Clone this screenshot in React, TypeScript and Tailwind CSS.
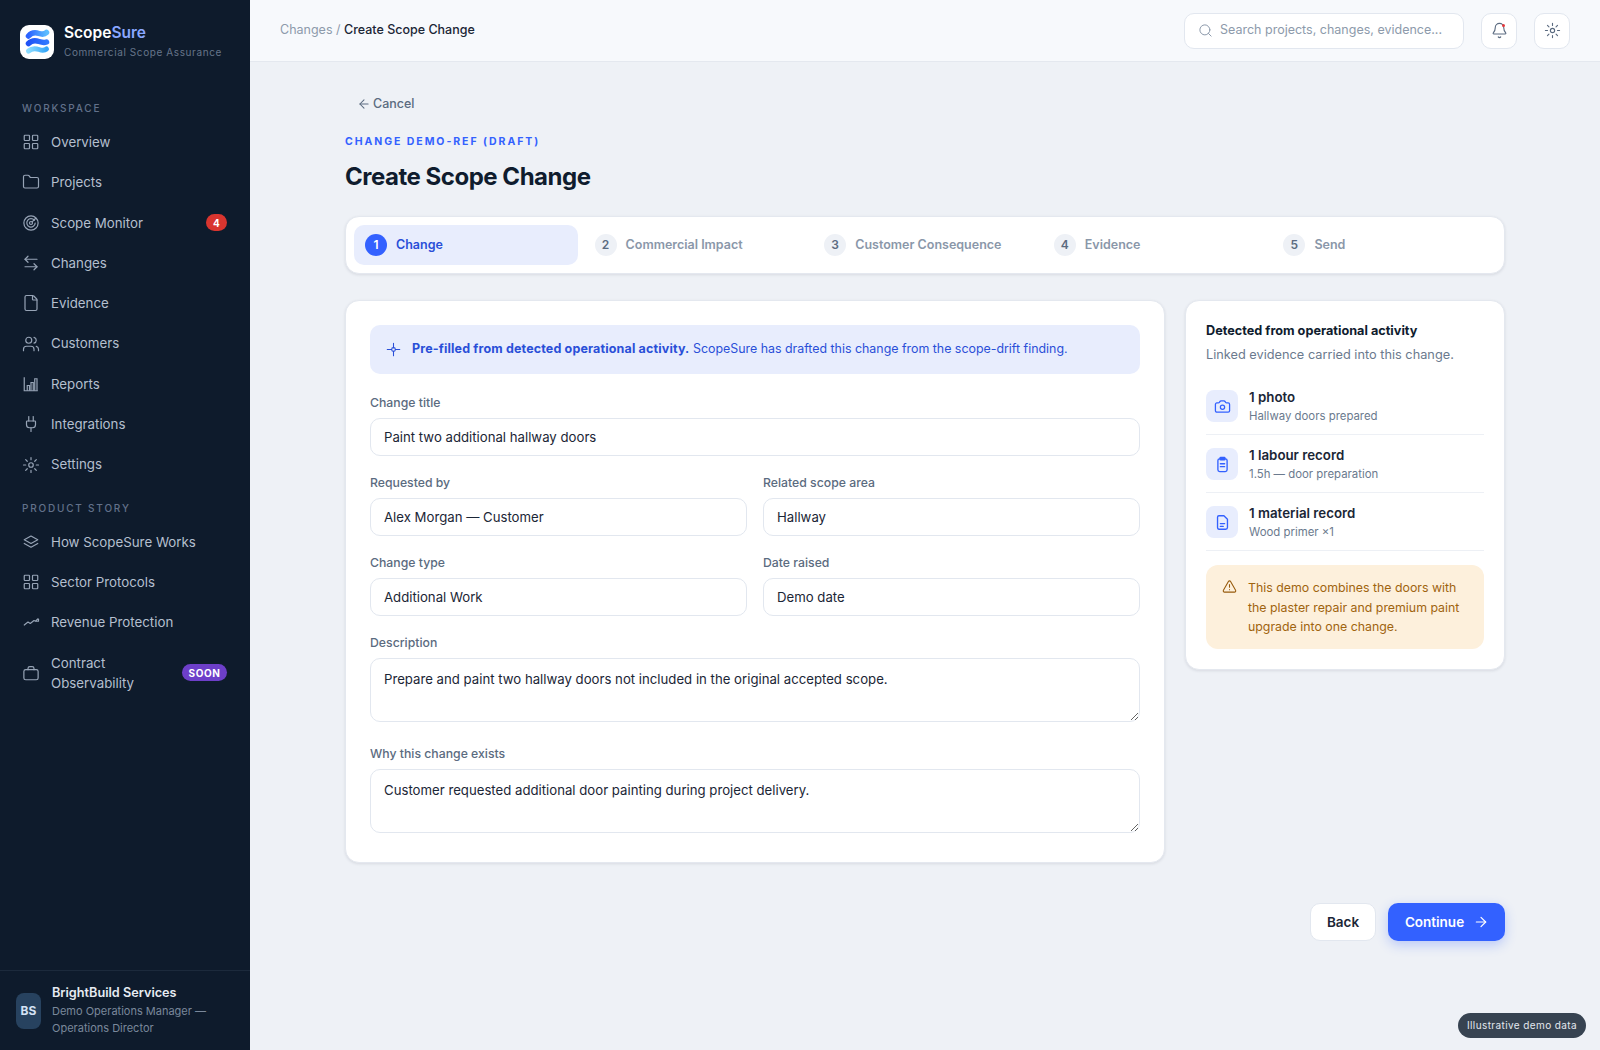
import React from "react";
import { ArrowLeft, ArrowRight, ArrowLeftRight, Bell, Camera, File, Folder, LayoutGrid, Plug, Search, TriangleAlert, Users } from "lucide-react";

type IconProps = { className?: string; strokeWidth?: number };

const SunThin = ({ className }: IconProps) => (
  <svg viewBox="0 0 24 24" fill="none" stroke="currentColor" strokeWidth="1.6" strokeLinecap="round" className={className}>
    <circle cx="12" cy="12" r="3" />
    <path d="M12 2v3M12 19v3M2 12h3M19 12h3M4.900 4.900l2.100 2.100M17 17l2.100 2.100M4.900 19.100L7 17M17 7l2.100-2.100" />
  </svg>
);
const Scope = ({ className }: IconProps) => (
  <svg viewBox="0 0 24 24" fill="none" stroke="currentColor" strokeWidth="1.6" strokeLinecap="round" className={className}>
    <circle cx="12" cy="12" r="9.500" />
    <path d="M16.500 8.500A5.600 5.600 0 1 0 17.600 12" />
    <circle cx="12" cy="12" r="2" />
    <path d="M13.500 10.500L18 6" />
  </svg>
);
const Reports = ({ className }: IconProps) => (
  <svg viewBox="0 0 24 24" fill="none" stroke="currentColor" strokeWidth="1.6" className={className}>
    <path d="M3 3v18h18" />
    <path d="M7 21v-7h3v7M12 21V10h3v11M17 21V5h3v16" />
  </svg>
);
const Sparkle = ({ className }: IconProps) => (
  <svg viewBox="0 0 24 24" fill="none" stroke="currentColor" strokeWidth="1.7" strokeLinecap="round" className={className}>
    <path d="M12 2v7M12 15v7M2 12h7M15 12h7" />
    <circle cx="12" cy="12" r="3" />
  </svg>
);
const Stack = ({ className }: IconProps) => (
  <svg viewBox="0 0 24 24" fill="none" stroke="currentColor" strokeWidth="1.6" strokeLinecap="round" strokeLinejoin="round" className={className}>
    <path d="M12 4L3 9l9 5 9-5z" />
    <path d="M3 14l9 5 9-5" />
  </svg>
);
const Trend = ({ className }: IconProps) => (
  <svg viewBox="0 0 24 24" fill="none" stroke="currentColor" strokeWidth="1.6" strokeLinecap="round" strokeLinejoin="round" className={className}>
    <path d="M3 16l5-4 3 2 5-4 2 1 3-3" />
    <path d="M22 8v3h-3" />
  </svg>
);
const Case = ({ className }: IconProps) => (
  <svg viewBox="0 0 24 24" fill="none" stroke="currentColor" strokeWidth="1.6" strokeLinecap="round" strokeLinejoin="round" className={className}>
    <rect x="2.500" y="7.500" width="19" height="13.500" rx="2.500" />
    <path d="M8 7.500V6a2.500 2.500 0 0 1 2.500-2.500h3A2.500 2.500 0 0 1 16 6v1.500" />
  </svg>
);
const Clip = ({ className }: IconProps) => (
  <svg viewBox="0 0 24 24" fill="none" stroke="currentColor" strokeWidth="1.9" strokeLinecap="round" strokeLinejoin="round" className={className}>
    <rect x="5.500" y="4" width="13" height="18" rx="2.500" />
    <rect x="8.500" y="2" width="7" height="3.500" rx="1" fill="currentColor" />
    <path d="M9 11h6M9 15h6" />
  </svg>
);
const Doc = ({ className }: IconProps) => (
  <svg viewBox="0 0 24 24" fill="none" stroke="currentColor" strokeWidth="1.9" strokeLinecap="round" strokeLinejoin="round" className={className}>
    <path d="M7 2.500h7l5 5V19a2.500 2.500 0 0 1-2.500 2.500h-9.500A2.500 2.500 0 0 1 5 19V4.500a2 2 0 0 1 2-2z" />
    <path d="M9 13.500h6M9 17.500h4" />
  </svg>
);
const Logo = () => (
  <div className="flex h-[34px] w-[34px] shrink-0 items-center justify-center rounded-[9px] bg-white">
    <svg viewBox="0 0 34 34" fill="none" strokeLinecap="round" className="h-[34px] w-[34px]">
      <defs>
        <linearGradient id="lg1" x1="0" y1="0" x2="1" y2="0"><stop offset="0" stopColor="#2b63ff" /><stop offset="1" stopColor="#5cbcff" /></linearGradient>
        <linearGradient id="lg2" x1="0" y1="0" x2="1" y2="0"><stop offset="0" stopColor="#1f52f5" /><stop offset="1" stopColor="#2f78ff" /></linearGradient>
        <linearGradient id="lg3" x1="0" y1="0" x2="1" y2="0"><stop offset="0" stopColor="#8bdcff" /><stop offset="1" stopColor="#35a6f8" /></linearGradient>
      </defs>
      <path d="M8.500 11C12 7 16 7.500 19 8.500S24 10 26.500 7.500" stroke="url(#lg1)" strokeWidth="5.500" />
      <path d="M8.500 18.500C12 15 16 15.500 19 16.500S24 18 26.500 17" stroke="url(#lg2)" strokeWidth="5.500" />
      <path d="M8.500 26C12 23 16 23.500 19 24.500S24 26 26.500 24" stroke="url(#lg3)" strokeWidth="5" />
    </svg>
  </div>
);

const NavItem = ({ icon: Icon, label, badge }: { icon: React.ComponentType<IconProps>; label: string; badge?: React.ReactNode }) => (
  <div className="flex items-center gap-[11px] rounded-lg py-[10px] pr-[11px] pl-[10px] text-[13.3px] leading-[20.3px] text-[#b4bfce]">
    <Icon className="h-[18px] w-[18px] shrink-0 text-[#97a4b6]" strokeWidth={1.6} />
    <span className="min-w-0 flex-1">{label}</span>
    {badge}
  </div>
);

const SectionLabel = ({ children }: { children: React.ReactNode }) => (
  <div className="px-[10px] pb-[6px] text-[10px] font-medium leading-[15px] tracking-[0.18em] text-[#62718a]">{children}</div>
);

const Step = ({ n, label, active }: { n: number; label: string; active?: boolean }) => (
  <div className={active ? "flex h-[40px] items-center gap-[9px] rounded-[10px] bg-[#e8edfd] px-[11px]" : "flex h-[40px] items-center gap-[9px] rounded-[10px] px-[11px]"}>
    <span className={active ? "flex h-[22px] w-[22px] items-center justify-center rounded-full bg-[#3361ff] text-[12px] font-semibold text-white" : "flex h-[22px] w-[22px] items-center justify-center rounded-full bg-[#eef1f6] text-[12px] font-semibold text-[#5b6b80]"}>{n}</span>
    <span className={active ? "text-[12.5px] font-semibold text-[#2a4fd8]" : "text-[12.5px] font-semibold text-[#8a97a9]"}>{label}</span>
  </div>
);

const Label = ({ children }: { children: React.ReactNode }) => (
  <label className="mb-[6px] block text-[12.25px] font-medium leading-[18px] text-[#5b6b80]">{children}</label>
);

const Field = ({ label, value }: { label: string; value: string }) => (
  <div>
    <Label>{label}</Label>
    <input readOnly value={value} className="h-[38px] w-full rounded-[10px] border border-[#e2e7ef] bg-white px-[13px] text-[13.2px] text-[#1b2636] outline-none" />
  </div>
);

const Area = ({ label, value }: { label: string; value: string }) => (
  <div>
    <Label>{label}</Label>
    <textarea readOnly value={value} className="h-[64px] w-full rounded-[10px] border border-[#e2e7ef] bg-white px-[13px] py-[10px] text-[13.2px] leading-[20px] text-[#1b2636] outline-none" />
  </div>
);

const Evidence = ({ icon: Icon, title, sub }: { icon: React.ComponentType<IconProps>; title: string; sub: string }) => (
  <div className="flex items-center gap-[11px] border-b border-[#edf0f5] pt-[11px] pb-[10px]">
    <div className="flex h-[32px] w-[32px] shrink-0 items-center justify-center rounded-[8px] bg-[#e8edfd] text-[#3361ff]">
      <Icon className="h-[17px] w-[17px]" strokeWidth={1.8} />
    </div>
    <div>
      <div className="text-[13.3px] font-semibold leading-[18px] text-[#1b2636]">{title}</div>
      <div className="mt-[2px] text-[11.4px] leading-[16px] text-[#6b7a8e]">{sub}</div>
    </div>
  </div>
);

export default function App() {
  return (
    <div className="flex h-[1050px] overflow-hidden bg-[#eef1f6] font-['Inter',sans-serif]">
      <aside className="flex h-full w-[250px] shrink-0 flex-col bg-[#0e1b2c]">
        <div className="flex items-center gap-[10px] px-[20px] pt-[23px]">
          <Logo />
          <div>
            <div className="text-[15.5px] font-semibold leading-[20px] text-white">Scope<span className="text-[#8aa7ff]">Sure</span></div>
            <div className="mt-[2px] text-[10px] leading-[15px] tracking-[0.06em] text-[#66758a]">Commercial Scope Assurance</div>
          </div>
        </div>
        <nav className="mt-[41px] px-[12px]">
          <SectionLabel>WORKSPACE</SectionLabel>
          <NavItem icon={LayoutGrid} label="Overview" />
          <NavItem icon={Folder} label="Projects" />
          <NavItem icon={Scope} label="Scope Monitor" badge={<span className="flex h-[17px] w-[21px] items-center justify-center rounded-full bg-[#d9352f] text-[10px] font-bold text-white">4</span>} />
          <NavItem icon={ArrowLeftRight} label="Changes" />
          <NavItem icon={File} label="Evidence" />
          <NavItem icon={Users} label="Customers" />
          <NavItem icon={Reports} label="Reports" />
          <NavItem icon={Plug} label="Integrations" />
          <NavItem icon={SunThin} label="Settings" />
          <div className="mt-[16px]"><SectionLabel>PRODUCT STORY</SectionLabel></div>
          <NavItem icon={Stack} label="How ScopeSure Works" />
          <NavItem icon={LayoutGrid} label="Sector Protocols" />
          <NavItem icon={Trend} label="Revenue Protection" />
          <NavItem icon={Case} label="Contract Observability" badge={<span className="flex h-[17px] w-[45px] items-center justify-center rounded-full bg-[#6d3fc9] text-[10px] font-bold tracking-[0.06em] text-white">SOON</span>} />
        </nav>
        <div className="mt-auto flex items-center gap-[11px] border-t border-[#1c2a3c] px-[16px] pt-[13px] pb-[13px]">
          <div className="flex h-[36px] w-[25px] shrink-0 items-center justify-center rounded-[8px] bg-[#27425f] text-[12px] font-bold text-[#d5e2f5]">BS</div>
          <div>
            <div className="text-[12.7px] font-semibold leading-[18px] text-[#e6ebf2]">BrightBuild Services</div>
            <div className="mt-[1px] text-[11px] leading-[17px] text-[#7a889b]">Demo Operations Manager — Operations Director</div>
          </div>
        </div>
      </aside>

      <div className="flex min-w-0 flex-1 flex-col">
        <header className="flex h-[62px] shrink-0 items-center justify-between border-b border-[#e4e8ef] bg-[#f7f9fc] pr-[30px] pl-[30px]">
          <div className="text-[12.5px] text-[#8d9aab]">Changes / <span className="font-medium text-[#1b2636]">Create Scope Change</span></div>
          <div className="flex items-center gap-[17px]">
            <div className="flex h-[36px] w-[280px] items-center gap-[7px] rounded-[10px] border border-[#e2e7ef] bg-white px-[13px]">
              <Search className="h-[15px] w-[15px] shrink-0 text-[#8d9aab]" strokeWidth={1.6} />
              <span className="text-[12.5px] whitespace-nowrap text-[#8d9aab]">Search projects, changes, evidence...</span>
            </div>
            <div className="relative flex h-[36px] w-[36px] items-center justify-center rounded-[10px] border border-[#e2e7ef] bg-white">
              <Bell className="h-[17px] w-[17px] text-[#5b6b80]" strokeWidth={1.6} />
              <span className="absolute top-[10px] right-[11px] h-[3px] w-[3px] rounded-full bg-[#e5383b]" />
            </div>
            <div className="flex h-[36px] w-[36px] items-center justify-center rounded-[10px] border border-[#e2e7ef] bg-white">
              <SunThin className="h-[17px] w-[17px] text-[#5b6b80]" />
            </div>
          </div>
        </header>

        <main className="mx-auto w-[1160px] pt-[33px]">
          <div className="flex items-center gap-[2px] pl-[12px] text-[12.5px] font-medium leading-[18px] text-[#5b6b80]">
            <ArrowLeft className="h-[14px] w-[14px]" strokeWidth={1.8} /> Cancel
          </div>
          <div className="mt-[21px] text-[10.5px] leading-[16px] font-bold tracking-[0.185em] text-[#3361ff]">CHANGE DEMO-REF (DRAFT)</div>
          <h1 className="mt-[11px] text-[24px] leading-[32px] font-bold tracking-[-0.02em] text-[#0f1c2e]">Create Scope Change</h1>

          <div className="mt-[23px] grid grid-cols-5 gap-[6px] rounded-[14px] border border-[#e4e8ef] bg-white p-[8px] shadow-[0_1px_3px_rgba(15,28,46,0.1)]">
            <Step n={1} label="Change" active />
            <Step n={2} label="Commercial Impact" />
            <Step n={3} label="Customer Consequence" />
            <Step n={4} label="Evidence" />
            <Step n={5} label="Send" />
          </div>

          <div className="mt-[26px] flex items-start gap-[20px]">
            <section className="w-[820px] shrink-0 rounded-[14px] border border-[#e4e8ef] bg-white px-[24px] pt-[24px] pb-[23px] shadow-[0_1px_3px_rgba(15,28,46,0.1)]">
              <div className="flex h-[49px] items-center gap-[11px] rounded-[10px] bg-[#e8edfd] px-[16px] text-[12.4px] text-[#2a4fd8]">
                <Sparkle className="h-[15px] w-[15px] shrink-0" />
                <span><span className="text-[12.5px] font-bold tracking-[0.012em]">Pre-filled from detected operational activity.</span> ScopeSure has drafted this change from the scope-drift finding.</span>
              </div>
              <div className="mt-[20px]"><Field label="Change title" value="Paint two additional hallway doors" /></div>
              <div className="mt-[18px] grid grid-cols-2 gap-x-[16px] gap-y-[18px]">
                <Field label="Requested by" value="Alex Morgan — Customer" />
                <Field label="Related scope area" value="Hallway" />
                <Field label="Change type" value="Additional Work" />
                <Field label="Date raised" value="Demo date" />
              </div>
              <div className="mt-[18px]"><Area label="Description" value="Prepare and paint two hallway doors not included in the original accepted scope." /></div>
              <div className="mt-[17px]"><Area label="Why this change exists" value="Customer requested additional door painting during project delivery." /></div>
            </section>

            <aside className="w-[320px] shrink-0 rounded-[14px] border border-[#e4e8ef] bg-white px-[20px] pt-[21px] pb-[20px] shadow-[0_1px_3px_rgba(15,28,46,0.1)]">
              <div className="text-[12.7px] font-bold leading-[18px] text-[#0f1c2e]">Detected from operational activity</div>
              <div className="mt-[6px] text-[12.75px] leading-[18px] text-[#6b7a8e]">Linked evidence carried into this change.</div>
              <div className="mt-[13px]">
                <Evidence icon={Camera} title="1 photo" sub="Hallway doors prepared" />
                <Evidence icon={Clip} title="1 labour record" sub="1.5h — door preparation" />
                <Evidence icon={Doc} title="1 material record" sub="Wood primer ×1" />
              </div>
              <div className="mt-[14px] flex items-start gap-[11px] rounded-[12px] bg-[#fdf0dc] px-[16px] pt-[13px] pb-[12px]">
                <TriangleAlert className="mt-[1px] h-[15px] w-[15px] shrink-0 text-[#96590b]" strokeWidth={1.7} />
                <p className="text-[12.35px] leading-[19.5px] text-[#a0640f]">This demo combines the doors with the plaster repair and premium paint upgrade into one change.</p>
              </div>
            </aside>
          </div>

          <div className="mt-[40px] flex justify-end gap-[12px]">
            <button className="h-[38px] w-[66px] rounded-[10px] border border-[#e2e7ef] bg-white text-[13.5px] font-semibold text-[#1b2636]">Back</button>
            <button className="flex h-[38px] w-[117px] items-center justify-center gap-[9px] rounded-[10px] bg-[#3361ff] pl-[1px] text-[13.5px] font-semibold text-white shadow-[0_4px_12px_rgba(51,97,255,0.28)]">
              Continue <ArrowRight className="h-[16px] w-[16px]" strokeWidth={1.8} />
            </button>
          </div>
        </main>
      </div>

      <div className="fixed right-[14px] bottom-[12px] flex h-[25px] w-[128px] items-center justify-center rounded-full bg-[#374351] text-[10px] tracking-[0.04em] text-[#e3e8ef]">Illustrative demo data</div>
    </div>
  );
}
